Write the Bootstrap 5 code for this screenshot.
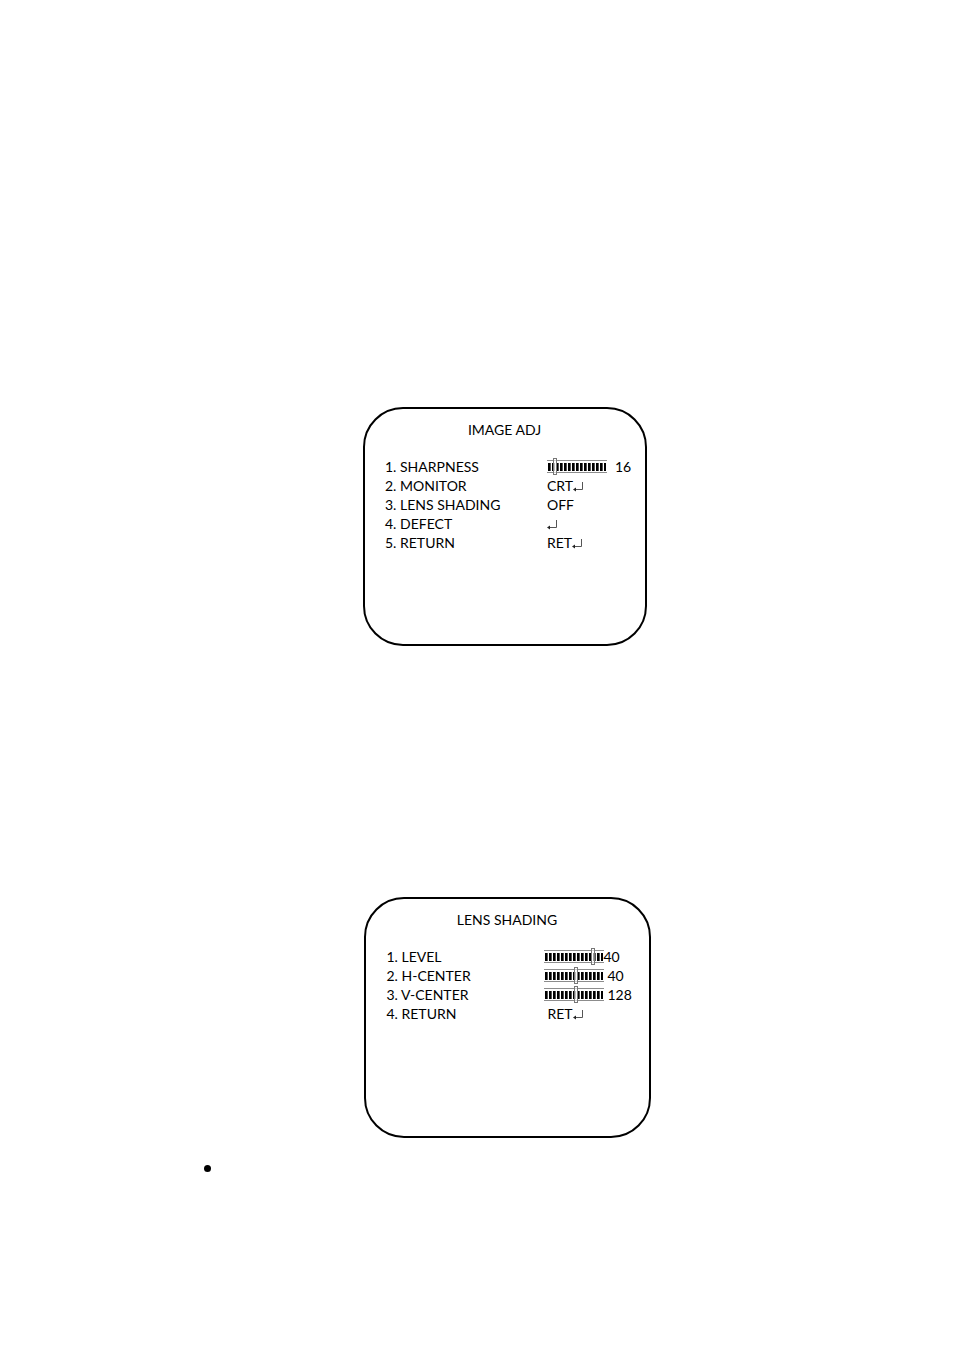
<!DOCTYPE html>
<html lang="en">
<head>
<meta charset="utf-8">
<meta name="viewport" content="width=device-width, initial-scale=1">
<title>Image adjustment menus</title>
<link href="https://cdn.jsdelivr.net/npm/bootstrap@5.3.0/dist/css/bootstrap.min.css" rel="stylesheet">
<style>
  body { font-family: Lato, "Liberation Sans", sans-serif; font-size: 14px; line-height: 19px; color: #000; background: #fff; }
  .manual-page { padding: 407px 147px 160px 203px; }
  .osd { border: 2px solid #000; border-radius: 40px; padding: 11px 0 0 20px; max-width: 100%; }
  .osd-image { width: 284px; min-height: 239px; }
  .osd-lens { width: 287px; min-height: 241px; padding-left: 21px; }
  .osd h2 { font-size: 14px; line-height: 19px; font-weight: 400; margin: 0 21px 18px 0; }
  .osd-label { width: 162px; }
  .osd-lens .osd-label { width: 157px; }
  .figure-gap { margin-top: 251px; }
  .enter { width: 10px; height: 10px; }
  .level { -webkit-appearance: none; appearance: none; width: 60px; height: 17px; margin: 0; background: transparent; }
  .level::-webkit-slider-runnable-track {
    height: 13px; border: solid #8c8c8c; border-width: 1px 0;
    background: repeating-linear-gradient(90deg, #fff 0 1px, #000 1px 3px, #555 3px 4px) 0 2px / 59px 8px no-repeat;
  }
  .level::-webkit-slider-thumb {
    -webkit-appearance: none; width: 4px; height: 17px; margin-top: -3px;
    border: 1px solid #777; background: rgba(255,255,255,.6);
  }
  .note-list { margin-top: 23px; padding-left: 1px; }
  .note-dot { width: 7px; height: 7px; background: #000; }
</style>
</head>
<body>
<svg class="d-none" aria-hidden="true">
  <symbol id="enter" viewBox="0 0 10 10"><path d="M9.500 0V7.500H2" fill="none" stroke="#555"/><path d="M0 7.500L3 5.500V9.500Z" fill="#222"/></symbol>
</svg>
<main class="manual-page">
  <section class="osd osd-image mx-auto">
    <h2 class="text-center">IMAGE ADJ</h2>
    <div class="d-flex flex-column">
      <div class="d-flex align-items-center"><label class="osd-label" for="sharpness">1. SHARPNESS</label><input class="level" id="sharpness" type="range" value="11"><output class="ps-2" for="sharpness">16</output></div>
      <div class="d-flex"><span class="osd-label">2. MONITOR</span><span>CRT<svg class="enter"><use href="#enter"/></svg></span></div>
      <div class="d-flex"><span class="osd-label">3. LENS SHADING</span><span>OFF</span></div>
      <div class="d-flex"><span class="osd-label">4. DEFECT</span><span><svg class="enter"><use href="#enter"/></svg></span></div>
      <div class="d-flex"><span class="osd-label">5. RETURN</span><span>RET<svg class="enter"><use href="#enter"/></svg></span></div>
    </div>
  </section>
  <div class="figure-gap ps-1">
    <section class="osd osd-lens mx-auto">
      <h2 class="text-center">LENS SHADING</h2>
      <div class="d-flex flex-column">
        <div class="d-flex align-items-center"><label class="osd-label" for="level">1. LEVEL</label><input class="level" id="level" type="range" value="84"><output for="level">40</output></div>
        <div class="d-flex align-items-center"><label class="osd-label" for="hcenter">2. H-CENTER</label><input class="level" id="hcenter" type="range" value="54"><output class="ps-1" for="hcenter">40</output></div>
        <div class="d-flex align-items-center"><label class="osd-label" for="vcenter">3. V-CENTER</label><input class="level" id="vcenter" type="range" value="54"><output class="ps-1" for="vcenter">128</output></div>
        <div class="d-flex"><span class="osd-label">4. RETURN</span><span class="ps-1">RET<svg class="enter"><use href="#enter"/></svg></span></div>
      </div>
    </section>
  </div>
  <ul class="note-list list-unstyled d-flex"><li class="note-dot rounded-circle mt-1"></li></ul>
</main>
<script src="https://cdn.jsdelivr.net/npm/bootstrap@5.3.0/dist/js/bootstrap.bundle.min.js"></script>
</body>
</html>
